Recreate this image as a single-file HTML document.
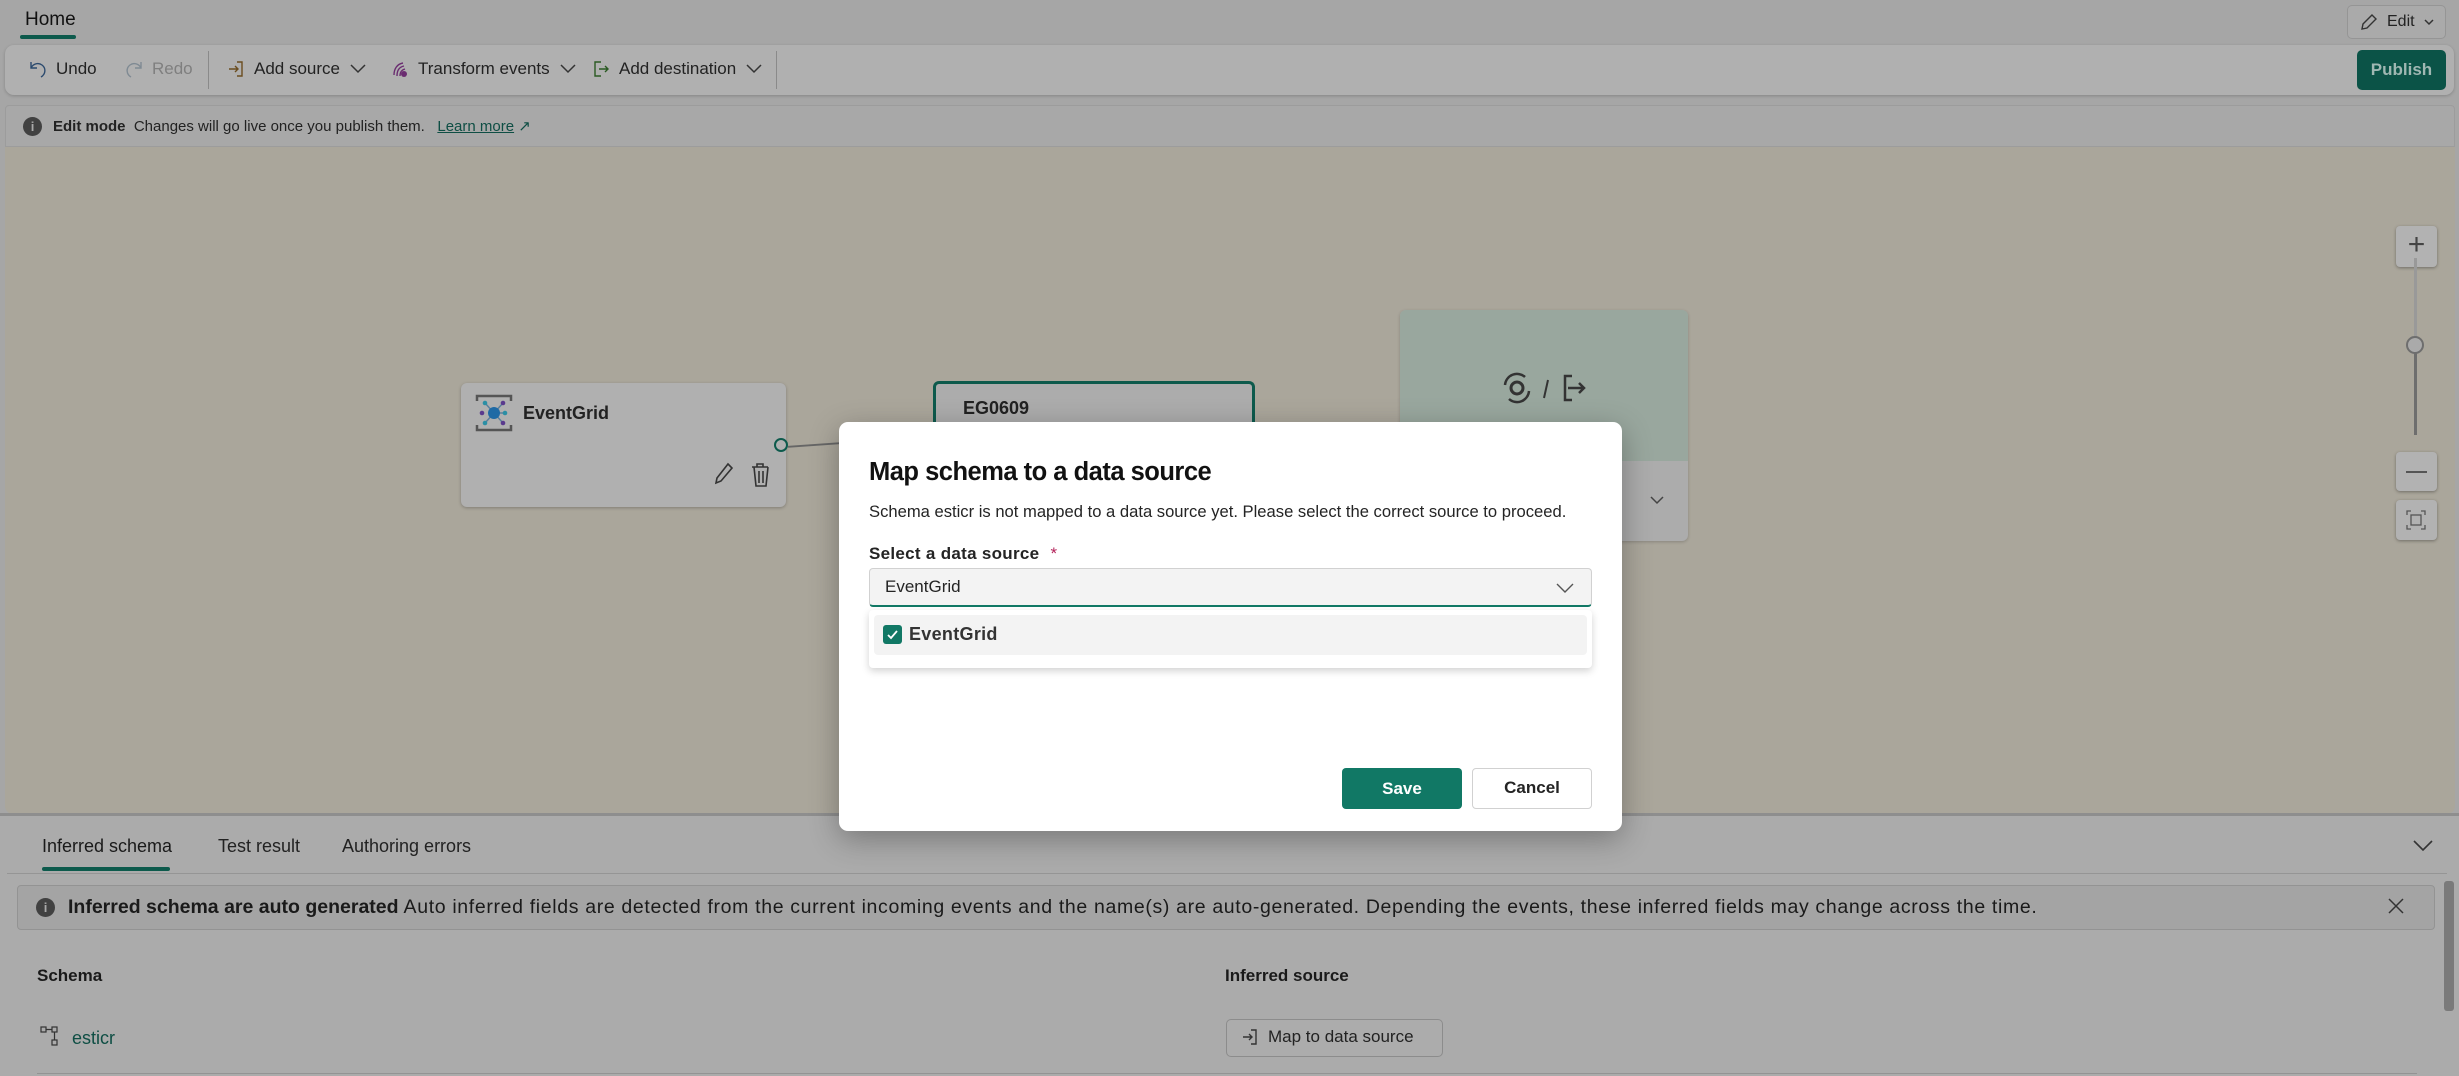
<!DOCTYPE html>
<html><head><meta charset="utf-8"><style>
*{box-sizing:border-box;margin:0;padding:0}
body{width:2459px;height:1076px;overflow:hidden;background:#a6a6a6;font-family:"Liberation Sans",sans-serif;color:#1a1a1a;position:relative}
.a{position:absolute;white-space:nowrap}
.tb{font-size:17px;color:#222;display:flex;align-items:center;gap:8px}
svg{display:block}
</style></head><body>
<!-- header -->
<div class="a" style="left:25px;top:9px;font-size:19px;color:#111">Home</div>
<div class="a" style="left:20px;top:35px;width:56px;height:4px;background:#0d5a4c;border-radius:2px"></div>
<div class="a" style="left:2347px;top:5px;width:99px;height:34px;border:1px solid #959595;border-radius:5px;background:#aaa"></div>
<div class="a tb" style="left:2359px;top:12px;font-size:16px">
<svg width="20" height="20" viewBox="0 0 20 20"><path d="M13 3l4 4-9 9-5 1 1-5z" fill="none" stroke="#333" stroke-width="1.4"/></svg>Edit <svg width="12" height="10" viewBox="0 0 12 10"><path d="M2 3l4 4 4-4" fill="none" stroke="#333" stroke-width="1.5"/></svg></div>
<!-- toolbar -->
<div class="a" style="left:5px;top:45px;width:2449px;height:50px;background:#b0b0b0;border-radius:9px;box-shadow:0 1px 3px rgba(0,0,0,.2)"></div>
<div class="a tb" style="left:28px;top:59px"><svg width="20" height="20" viewBox="0 0 20 20"><path d="M3 3v6h6M3 9c2-4 7-6 11-3s4 9-1 12" fill="none" stroke="#2b4a6e" stroke-width="1.4"/></svg>Undo</div>
<div class="a tb" style="left:124px;top:59px;color:#7f7f7f"><svg width="20" height="20" viewBox="0 0 20 20"><path d="M17 3v6h-6M17 9c-2-4-7-6-11-3s-4 9 1 12" fill="none" stroke="#7f8a93" stroke-width="1.4"/></svg>Redo</div>
<div class="a" style="left:208px;top:51px;width:1px;height:38px;background:#8a8a8a"></div>
<div class="a tb" style="left:226px;top:59px"><svg width="20" height="20" viewBox="0 0 20 20"><path d="M11 3h5v14h-5M3 10h9M9 7l3 3-3 3" fill="none" stroke="#6b4d1f" stroke-width="1.4"/></svg>Add source<svg width="20" height="14" viewBox="0 0 20 14"><path d="M3 3l7 7 7-7" fill="none" stroke="#333" stroke-width="1.5"/></svg></div>
<div class="a tb" style="left:390px;top:59px"><svg width="20" height="20" viewBox="0 0 20 20"><path d="M4 16c0-6 3-11 9-12M7 17c0-5 2-9 7-10M10 17c0-3 1-6 5-7" fill="none" stroke="#6a2c70" stroke-width="1.4"/><circle cx="14" cy="15" r="3" fill="#6a2c70"/></svg>Transform events<svg width="20" height="14" viewBox="0 0 20 14"><path d="M3 3l7 7 7-7" fill="none" stroke="#333" stroke-width="1.5"/></svg></div>
<div class="a tb" style="left:591px;top:59px"><svg width="20" height="20" viewBox="0 0 20 20"><path d="M10 3H4v14h6M8 10h9M14 7l3 3-3 3" fill="none" stroke="#2a5a22" stroke-width="1.4"/></svg>Add destination<svg width="20" height="14" viewBox="0 0 20 14"><path d="M3 3l7 7 7-7" fill="none" stroke="#333" stroke-width="1.5"/></svg></div>
<div class="a" style="left:776px;top:51px;width:1px;height:38px;background:#8a8a8a"></div>
<div class="a" style="left:2357px;top:50px;width:89px;height:40px;background:#0b5347;border-radius:5px;color:#9fb7b2;font-weight:bold;font-size:17px;line-height:40px;text-align:center">Publish</div>
<!-- edit mode bar -->
<div class="a" style="left:5px;top:105px;width:2450px;height:42px;background:#a8a8a8;border:1px solid #9c9c9c;border-radius:4px 4px 0 0"></div>
<div class="a" style="left:23px;top:117px;width:19px;height:19px;border-radius:50%;background:#414141;color:#aaa;font-size:13px;font-weight:bold;text-align:center;line-height:19px">i</div>
<div class="a" style="left:53px;top:117px;font-size:15px;color:#222"><b>Edit mode</b>&nbsp; Changes will go live once you publish them.&nbsp;&nbsp; <span style="color:#0e4e44;text-decoration:underline">Learn more</span> <span style="color:#0e4e44">↗</span></div>
<!-- canvas -->
<div class="a" style="left:5px;top:147px;width:2450px;height:667px;background:#aaa69b;border-radius:0 0 8px 8px"></div>
<!-- node eventgrid -->
<div class="a" style="left:461px;top:383px;width:325px;height:124px;background:#b0b0b0;border-radius:6px;box-shadow:0 1px 3px rgba(0,0,0,.25)"></div>
<svg class="a" style="left:475px;top:393px" width="38" height="40" viewBox="0 0 38 40"><path d="M2 8V3h34v5M2 32v5h34v-5" fill="none" stroke="#555" stroke-width="2.5"/><g stroke="#5a7f9c" stroke-width="1.5"><line x1="19" y1="20" x2="10" y2="10"/><line x1="19" y1="20" x2="28" y2="10"/><line x1="19" y1="20" x2="10" y2="30"/><line x1="19" y1="20" x2="28" y2="30"/><line x1="19" y1="20" x2="30" y2="20"/></g><circle cx="19" cy="20" r="6" fill="#1f6aa5"/><circle cx="10" cy="10" r="2.3" fill="#2b8fa5"/><circle cx="28" cy="10" r="2.3" fill="#5a3a8e"/><circle cx="7" cy="20" r="2.3" fill="#5a3a8e"/><circle cx="30" cy="20" r="2.3" fill="#2b8fa5"/><circle cx="10" cy="30" r="2.3" fill="#2b8fa5"/><circle cx="28" cy="30" r="2.3" fill="#5a3a8e"/></svg>
<div class="a" style="left:523px;top:403px;font-size:18px;font-weight:bold;color:#222">EventGrid</div>
<svg class="a" style="left:714px;top:461px" width="60" height="28" viewBox="0 0 60 28"><path d="M14 3l4 4-11 13-5 2 1-5z" fill="none" stroke="#333" stroke-width="1.6"/><path d="M38 6h16M43 6V3h6v3M40 6l2 19h10l2-19M45 10v12M49 10v12" fill="none" stroke="#333" stroke-width="1.6"/></svg>
<div class="a" style="left:774px;top:438px;width:14px;height:14px;border:2.5px solid #0d5a4c;border-radius:50%;background:#b0b0b0"></div>
<div class="a" style="left:788px;top:444px;width:52px;height:2px;background:#666;transform:rotate(-4deg)"></div>
<!-- EG0609 -->
<div class="a" style="left:933px;top:381px;width:322px;height:60px;background:#acacac;border:3px solid #0d5a4c;border-bottom:none;border-radius:6px 6px 0 0"></div>
<div class="a" style="left:963px;top:398px;font-size:18px;font-weight:bold;color:#222">EG0609</div>
<!-- destination -->
<div class="a" style="left:1400px;top:310px;width:288px;height:231px;background:#acacac;border-radius:6px;box-shadow:0 1px 3px rgba(0,0,0,.2)"></div>
<div class="a" style="left:1400px;top:310px;width:288px;height:151px;background:#99a79e;border-radius:6px 6px 0 0"></div>
<svg class="a" style="left:1500px;top:368px" width="92" height="40" viewBox="0 0 92 40"><circle cx="17" cy="20" r="6" fill="none" stroke="#333" stroke-width="3"/><path d="M5 17a12 12 0 0 1 20-8M29 23a12 12 0 0 1-20 8" fill="none" stroke="#333" stroke-width="2.5"/><path d="M44 30l4-18" stroke="#333" stroke-width="2"/><path d="M72 8h-7v24h7M68 20h16M79 15l5 5-5 5" fill="none" stroke="#333" stroke-width="2.5"/></svg>
<svg class="a" style="left:1649px;top:494px" width="16" height="12" viewBox="0 0 16 12"><path d="M2 3l6 6 6-6" fill="none" stroke="#444" stroke-width="1.5"/></svg>
<!-- zoom controls -->
<div class="a" style="left:2396px;top:226px;width:41px;height:41px;background:#b2b2b2;border-radius:4px;box-shadow:0 1px 3px rgba(0,0,0,.35);font-size:30px;text-align:center;line-height:38px;color:#444;font-weight:300">+</div>
<div class="a" style="left:2414px;top:258px;width:3px;height:176px;background:#999"></div>
<div class="a" style="left:2414px;top:345px;width:3px;height:90px;background:#6e6e6e"></div>
<div class="a" style="left:2406px;top:336px;width:18px;height:18px;border:2px solid #6e6e6e;border-radius:50%;background:#aaa"></div>
<div class="a" style="left:2396px;top:452px;width:41px;height:39px;background:#b2b2b2;border-radius:4px;box-shadow:0 1px 3px rgba(0,0,0,.35)"><div style="margin:19px 10px 0;height:1.5px;background:#555"></div></div>
<div class="a" style="left:2396px;top:500px;width:41px;height:40px;background:#b2b2b2;border-radius:4px;box-shadow:0 1px 3px rgba(0,0,0,.35)"><svg style="margin:10px" width="20" height="20" viewBox="0 0 20 20"><path d="M1 5V1h4M15 1h4v4M19 15v4h-4M5 19H1v-4" fill="none" stroke="#555" stroke-width="1.3"/><rect x="5" y="5" width="10" height="10" fill="none" stroke="#555" stroke-width="1.3"/></svg></div>
<!-- bottom panel -->
<div class="a" style="left:0;top:813px;width:2459px;height:263px;background:#ababab;border-top:3px solid #8e8e8e"></div>
<div class="a" style="left:42px;top:836px;font-size:18px;color:#1a1a1a">Inferred schema</div>
<div class="a" style="left:42px;top:867px;width:128px;height:4px;background:#0d5a4c;border-radius:2px"></div>
<div class="a" style="left:218px;top:836px;font-size:18px;color:#222">Test result</div>
<div class="a" style="left:342px;top:836px;font-size:18px;color:#222">Authoring errors</div>
<svg class="a" style="left:2412px;top:838px" width="22" height="14" viewBox="0 0 22 14"><path d="M2 3l9 9 9-9" fill="none" stroke="#333" stroke-width="1.6"/></svg>
<div class="a" style="left:7px;top:873px;width:2440px;height:1px;background:#959595"></div>
<div class="a" style="left:17px;top:885px;width:2418px;height:45px;background:#a4a4a4;border:1px solid #939393;border-radius:4px"></div>
<div class="a" style="left:36px;top:898px;width:19px;height:19px;border-radius:50%;background:#414141;color:#aaa;font-size:13px;font-weight:bold;text-align:center;line-height:19px">i</div>
<div class="a" style="left:68px;top:896px;font-size:19.5px;color:#1a1a1a;letter-spacing:0.65px"><b style="letter-spacing:0">Inferred schema are auto generated</b> Auto inferred fields are detected from the current incoming events and the name(s) are auto-generated. Depending the events, these inferred fields may change across the time.</div>
<svg class="a" style="left:2387px;top:897px" width="18" height="18" viewBox="0 0 18 18"><path d="M2 2l14 14M16 2L2 16" stroke="#333" stroke-width="1.5"/></svg>
<div class="a" style="left:2444px;top:881px;width:10px;height:130px;background:#7a7a7a;border-radius:3px"></div>
<div class="a" style="left:37px;top:966px;font-size:17px;font-weight:bold">Schema</div>
<div class="a" style="left:1225px;top:966px;font-size:17px;font-weight:bold">Inferred source</div>
<svg class="a" style="left:40px;top:1025px" width="20" height="22" viewBox="0 0 20 22"><rect x="1" y="2" width="5" height="5" fill="none" stroke="#333" stroke-width="1.2"/><rect x="12" y="2" width="5" height="5" fill="none" stroke="#333" stroke-width="1.2"/><rect x="12" y="15" width="5" height="5" fill="none" stroke="#333" stroke-width="1.2"/><path d="M6 4.5h6M14.5 7v8" stroke="#333" stroke-width="1.2"/></svg>
<div class="a" style="left:72px;top:1028px;font-size:18px;color:#0e4e44">esticr</div>
<div class="a" style="left:1226px;top:1019px;width:217px;height:38px;border:1.5px solid #8c8c8c;border-radius:5px;background:#acacac"></div>
<div class="a tb" style="left:1240px;top:1027px"><svg width="20" height="20" viewBox="0 0 20 20"><path d="M11 3h5v14h-5M3 10h9M9 7l3 3-3 3" fill="none" stroke="#333" stroke-width="1.4"/></svg>Map to data source</div>
<div class="a" style="left:37px;top:1073px;width:2380px;height:1px;background:#939393"></div>
<!-- modal -->
<div class="a" style="left:839px;top:422px;width:783px;height:409px;background:#fff;border-radius:9px;box-shadow:0 8px 30px rgba(0,0,0,.3)"></div>
<div class="a" style="left:869px;top:458px;font-size:25.5px;font-weight:bold;color:#111;letter-spacing:-0.5px">Map schema to a data source</div>
<div class="a" style="left:869px;top:502px;font-size:16.6px;color:#242424">Schema esticr is not mapped to a data source yet. Please select the correct source to proceed.</div>
<div class="a" style="left:869px;top:544px;font-size:17px;font-weight:bold;color:#242424;letter-spacing:.3px">Select a data source <span style="color:#b4235a;margin-left:6px;font-weight:normal">*</span></div>
<div class="a" style="left:869px;top:568px;width:723px;height:39px;background:#f3f3f3;border:1px solid #d1d1d1;border-bottom:2px solid #117865;border-radius:4px"></div>
<div class="a" style="left:885px;top:577px;font-size:17px;color:#242424">EventGrid</div>
<svg class="a" style="left:1555px;top:581px" width="20" height="14" viewBox="0 0 20 14"><path d="M2 3l8 8 8-8" fill="none" stroke="#555" stroke-width="1.4"/></svg>
<div class="a" style="left:869px;top:610px;width:723px;height:58px;background:#fff;border-radius:4px;box-shadow:0 3px 8px rgba(0,0,0,.18)"></div>
<div class="a" style="left:874px;top:615px;width:713px;height:40px;background:#f3f3f3;border-radius:4px"></div>
<div class="a" style="left:883px;top:625px;width:19px;height:19px;background:#117865;border-radius:3px"><svg width="19" height="19" viewBox="0 0 19 19"><path d="M5 10l3 3 6-7" fill="none" stroke="#fff" stroke-width="1.8"/></svg></div>
<div class="a" style="left:909px;top:624px;font-size:18px;font-weight:bold;color:#333;letter-spacing:.3px">EventGrid</div>
<div class="a" style="left:1342px;top:768px;width:120px;height:41px;background:#117865;border-radius:4px;color:#fff;font-weight:bold;font-size:17px;text-align:center;line-height:41px">Save</div>
<div class="a" style="left:1472px;top:768px;width:120px;height:41px;background:#fff;border:1.5px solid #d1d1d1;border-radius:4px;color:#242424;font-weight:bold;font-size:17px;text-align:center;line-height:38px">Cancel</div>
</body></html>
